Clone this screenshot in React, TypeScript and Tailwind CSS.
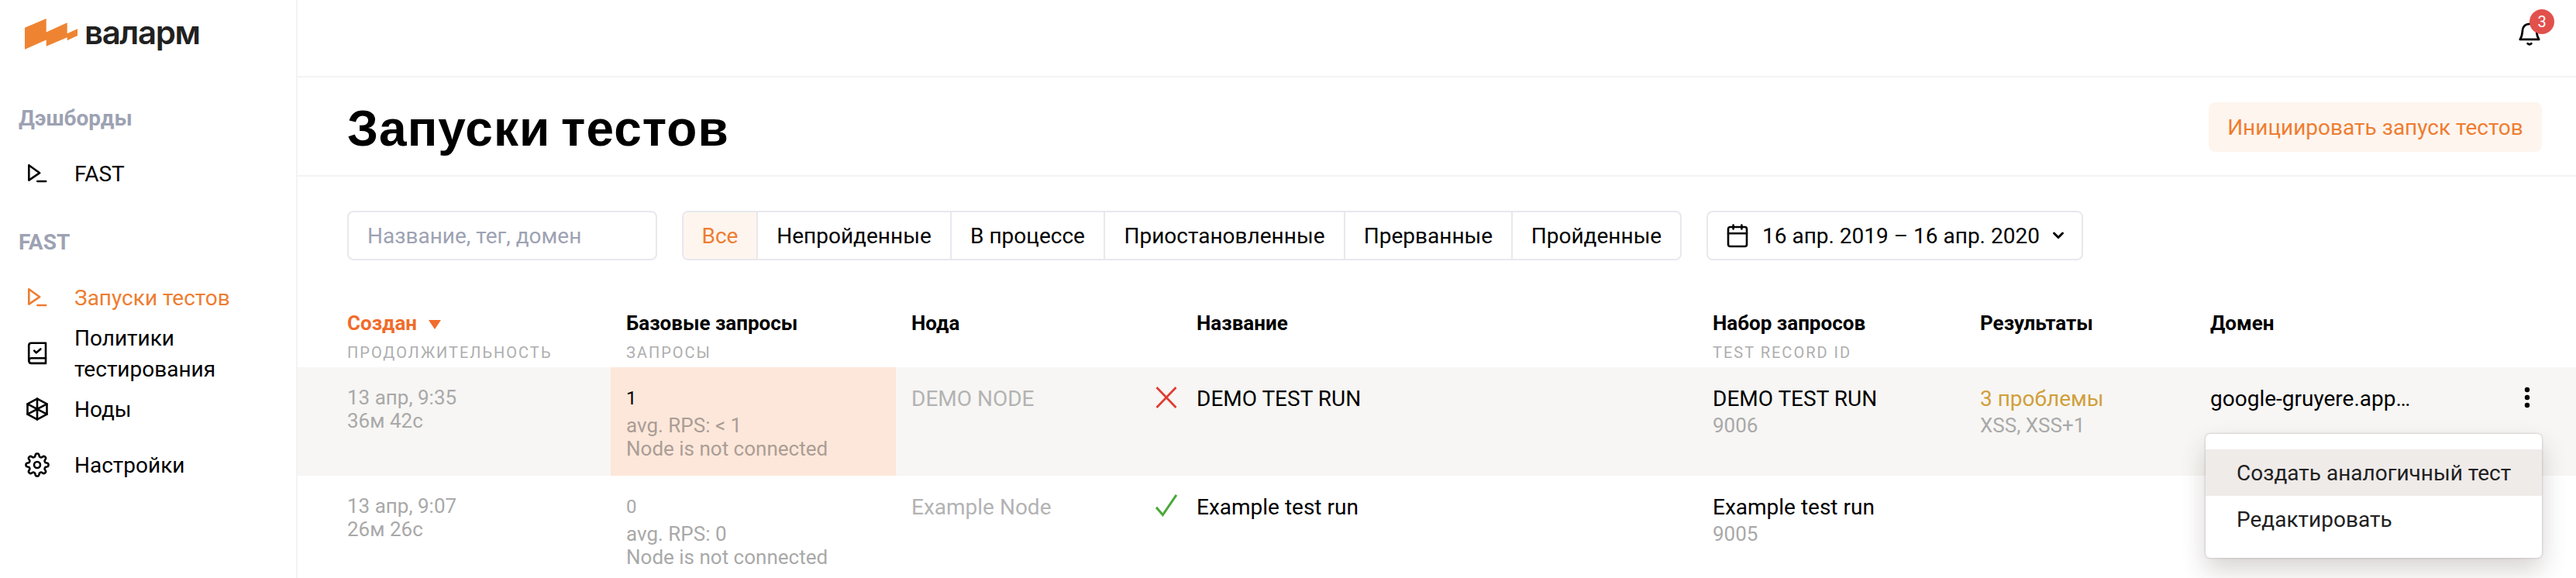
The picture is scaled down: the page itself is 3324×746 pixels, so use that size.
import React from "react";

type IconProps = { className?: string };

const PlayPrompt = ({ className = "" }: IconProps) => (
  <svg viewBox="0 0 32 32" className={`h-8 w-8 ${className}`} fill="none" stroke="currentColor" strokeWidth="2.6" strokeLinejoin="round" strokeLinecap="round">
    <path d="M5.3 5.2V24.6L19.2 15.2Z" />
    <path d="M16.3 26H27.2" />
  </svg>
);

const Book = () => (
  <svg viewBox="0 0 32 32" className="h-8 w-8" fill="none" stroke="currentColor" strokeWidth="2.6" strokeLinejoin="round" strokeLinecap="round">
    <path d="M27 2.7H8.5Q5.2 2.7 5.2 6V25.2Q5.2 28.9 8.5 28.9H27Z" />
    <path d="M5.5 24.7Q5.8 22.3 8.5 22.3H27" />
    <path d="M12.2 12.7L14.8 15.3L20.4 10.5" />
  </svg>
);

const Hexagon = () => (
  <svg viewBox="0 0 32 32" className="h-8 w-8" fill="none" stroke="currentColor" strokeWidth="2.6" strokeLinejoin="round" strokeLinecap="round">
    <path d="M16 2.6L28.5 9.3V22.7L16 29.4L3.5 22.7V9.3Z" />
    <path d="M16 2.6V29.4M3.5 9.3L28.5 22.7M28.5 9.3L3.5 22.7" />
  </svg>
);

const gearPath = (() => {
  const pts: string[] = [];
  const n = 160;
  for (let i = 0; i < n; i++) {
    const a = (i / n) * Math.PI * 2;
    const w = Math.tanh(1.8 * Math.cos(8 * a)) / Math.tanh(1.8);
    const r = 12.6 + 1.9 * w;
    pts.push(`${(16 + r * Math.sin(a)).toFixed(2)} ${(16 - r * Math.cos(a)).toFixed(2)}`);
  }
  return `M${pts.join("L")}Z`;
})();

const Gear = () => (
  <svg viewBox="0 0 32 32" className="h-8 w-8 overflow-visible" fill="none" stroke="currentColor" strokeWidth="2.6" strokeLinejoin="round">
    <path d={gearPath} />
    <circle cx="16" cy="16" r="4" />
  </svg>
);

const Logo = () => (
  <svg viewBox="0 0 68 40" className="h-10 w-[68px]" fill="#ee8432">
    <path d="M0 11.7L27.7 0V17.6L54.7 5.3V19.2L68 13.3V22L54.7 28.3V24.3L27.7 35.7V27.6L0 39.7Z" />
  </svg>
);

const Bell = () => (
  <svg viewBox="0 0 32 32" className="h-8 w-8" fill="none" stroke="black" strokeWidth="2.8" strokeLinejoin="round" strokeLinecap="round">
    <path d="M3.8 22.9C6.7 18.5 6.5 16.5 6.9 11.8C7.3 6 11 2.8 16 2.8S24.700 6 25.100 11.800C25.500 16.500 25.300 18.500 28.200 22.900Z" />
    <path d="M13.7 28.2Q16 30.3 18.3 28.2" />
  </svg>
);

const Calendar = () => (
  <svg viewBox="0 0 28 32" className="h-8 w-7" fill="none" stroke="black" strokeWidth="2.6" strokeLinejoin="round" strokeLinecap="round">
    <rect x="2" y="5" width="24" height="25" rx="2.5" />
    <path d="M2 13.3H26M8.6 2.6V7.5M19.4 2.6V7.5" />
  </svg>
);

const Cross = () => (
  <svg viewBox="0 0 28 30" className="-mt-px h-[30px] w-7" fill="none" stroke="#e03c31" strokeWidth="2.8">
    <path d="M1.5 2L26.5 28M26.5 2L1.5 28" />
  </svg>
);

const Check = () => (
  <svg viewBox="0 0 28 30" className="-mt-px h-[30px] w-7" fill="none" stroke="#4aa83a" strokeWidth="3">
    <path d="M1 16.8L9.4 26.6L27 0.8" />
  </svg>
);

const NavItem = ({ icon, label, active }: { icon: React.ReactNode; label: string; active?: boolean }) => (
  <a className={`flex h-[72px] items-center pl-8 text-[28px] leading-10 ${active ? "text-[#ee7d30]" : "text-black"}`}>
    <span className="w-16 shrink-0">{icon}</span>
    <span className="w-[230px] pt-0.5">{label}</span>
  </a>
);

const NavTitle = ({ children }: { children: React.ReactNode }) => (
  <h2 className="flex h-[72px] items-center pt-0.5 pl-6 text-[28px] leading-10 font-bold text-[#9da2b3]">{children}</h2>
);

const filters = [
  { label: "Все", w: "w-24" },
  { label: "Непройденные", w: "w-[250px]" },
  { label: "В процессе", w: "w-[198px]" },
  { label: "Приостановленные", w: "w-[310px]" },
  { label: "Прерванные", w: "w-[216px]" },
  { label: "Пройденные", w: "w-[216px]" },
];

const cols = "grid grid-cols-[340px_368px_368px_666px_345px_297px_1fr]";

const Head = ({ title, sub, className = "" }: { title: React.ReactNode; sub?: string; className?: string }) => (
  <div className={className}>
    <div className="flex h-8 items-center text-[26px] leading-8 font-bold">{title}</div>
    {sub && <div className="mt-2.5 text-xl leading-6 tracking-[2px] whitespace-nowrap text-[#aeaeae]">{sub}</div>}
  </div>
);

type Run = {
  date: string;
  dur: string;
  count: string;
  rps: string;
  node: string;
  ok: boolean;
  name: string;
  record: string;
  problems?: string;
  kinds?: string;
  domain?: string;
  hot?: boolean;
};

const runs: Run[] = [
  { date: "13 апр, 9:35", dur: "36м 42с", count: "1", rps: "avg. RPS: < 1", node: "DEMO NODE", ok: false, name: "DEMO TEST RUN", record: "9006", problems: "3 проблемы", kinds: "XSS, XSS+1", domain: "google-gruyere.app…", hot: true },
  { date: "13 апр, 9:07", dur: "26м 26с", count: "0", rps: "avg. RPS: 0", node: "Example Node", ok: true, name: "Example test run", record: "9005" },
];

const Row = ({ run }: { run: Run }) => (
  <div className={`${cols} h-[140px] shrink-0 pl-16 text-[28px] leading-8 text-black ${run.hot ? "bg-[#f7f6f4]" : ""}`}>
    <div className="pt-6 text-[26px] leading-[30px] text-[#a9a9a9]">
      <div>{run.date}</div>
      <div>{run.dur}</div>
    </div>
    <div className={`pt-6 pl-5 text-[26px] leading-[30px] ${run.hot ? "bg-[#fce7da] text-[#ab9d95]" : "text-[#a9a9a9]"}`}>
      <div className={`text-2xl leading-8 ${run.hot ? "text-black" : ""}`}>{run.count}</div>
      <div className="pt-1">{run.rps}</div>
      <div>Node is not connected</div>
    </div>
    <div className="flex items-start justify-between pt-[25px] pl-5 text-[#b3b3b3]">
      <span>{run.node}</span>
      <span className="mr-[5px]">{run.ok ? <Check /> : <Cross />}</span>
    </div>
    <div className="pt-[25px] pl-5">{run.name}</div>
    <div className="pt-[25px] pl-5">
      <div>{run.name}</div>
      <div className="pt-[3px] text-[26px] leading-[30px] text-[#a9a9a9]">{run.record}</div>
    </div>
    <div className="pt-[25px] pl-5">
      <div className="text-[#d19f3a]">{run.problems}</div>
      <div className="pt-[3px] text-[26px] leading-[30px] text-[#a9a9a9]">{run.kinds}</div>
    </div>
    <div className="flex items-start justify-between pt-[25px] pl-5">
      <span>{run.domain}</span>
      {run.hot && (
        <svg viewBox="0 0 8 28" className="mr-[59px] h-7 w-2">
          <circle cx="4" cy="4" r="3.2" />
          <circle cx="4" cy="14" r="3.2" />
          <circle cx="4" cy="24" r="3.2" />
        </svg>
      )}
    </div>
  </div>
);

export default function App() {
  return (
    <div className="relative flex h-[746px] w-[3324px] overflow-hidden bg-white font-['Roboto',sans-serif] text-black">
      <aside className="flex w-96 shrink-0 flex-col border-r-2 border-[#f3f3f5]">
        <div className="flex h-[116px] items-start pt-6 pl-8">
          <Logo />
          <span className="ml-[9px] font-['Inter',sans-serif] text-[42px] leading-9 font-semibold tracking-[-1.4px] text-[#212121]">валарм</span>
        </div>
        <NavTitle>Дэшборды</NavTitle>
        <NavItem icon={<PlayPrompt />} label="FAST" />
        <div className="mt-4" />
        <NavTitle>FAST</NavTitle>
        <NavItem icon={<PlayPrompt />} label="Запуски тестов" active />
        <NavItem icon={<Book />} label="Политики тестирования" />
        <NavItem icon={<Hexagon />} label="Ноды" />
        <NavItem icon={<Gear />} label="Настройки" />
      </aside>

      <main className="flex min-w-0 flex-1 flex-col">
        <header className="flex h-[100px] shrink-0 items-start justify-end border-b-2 border-[#f3f3f5] pt-7 pr-11">
          <div className="relative h-8 w-8">
            <Bell />
            <span className="absolute -top-4 left-4 flex h-8 w-8 items-center justify-center rounded-full bg-[#e2504c] text-xl leading-none text-white">3</span>
          </div>
        </header>

        <div className="flex h-32 shrink-0 items-center justify-between border-b-2 border-[#f3f3f5] pr-11 pl-16">
          <h1 className="pt-1.5 font-['Liberation_Sans',sans-serif] text-[64px] leading-none font-bold tracking-[1px] [word-spacing:-5px]">Запуски тестов</h1>
          <button className="mt-0.5 h-16 w-[430px] rounded-lg bg-[#fef5ef] pt-0.5 text-[28px] text-[#ee7d30]">Инициировать запуск тестов</button>
        </div>

        <div className="mt-11 flex h-16 shrink-0 pl-16 text-[28px] leading-8">
          <div className="flex w-[400px] items-center rounded-lg border-2 border-[#e8e8ee] pt-0.5 pl-6 text-[#9da2b3]">Название, тег, домен</div>
          <div className="ml-8 flex w-[1290px] overflow-hidden rounded-lg border-2 border-[#e8e8ee]">
            {filters.map((f, i) => (
              <div key={f.label} className={`flex items-center justify-center pt-0.5 whitespace-nowrap ${f.w} ${i === 0 ? "bg-[#fef5ef] text-[#ee7d30]" : ""} ${i < filters.length - 1 ? "border-r-2 border-[#e8e8ee]" : ""}`}>
                {f.label}
              </div>
            ))}
          </div>
          <div className="ml-8 flex w-[486px] items-center rounded-lg border-2 border-[#e8e8ee] pl-6">
            <Calendar />
            <span className="ml-[18px] w-[360px] pt-0.5 whitespace-nowrap">16 апр. 2019 – 16 апр. 2020</span>
            <svg viewBox="0 0 16 12" className="ml-3.5 h-3 w-4" fill="none" stroke="black" strokeWidth="3" strokeLinecap="round" strokeLinejoin="round">
              <path d="M2.5 3L8 8.5L13.5 3" />
            </svg>
          </div>
        </div>

        <div className={`${cols} mt-[65px] h-[73px] shrink-0 pl-16`}>
          <Head
            title={
              <span className="flex items-center text-[#f06c2b]">
                Создан
                <svg viewBox="0 0 16 12" className="mt-1 ml-[15px] h-3 w-4" fill="currentColor">
                  <path d="M0 0H16L8 12Z" />
                </svg>
              </span>
            }
            sub="ПРОДОЛЖИТЕЛЬНОСТЬ"
          />
          <Head title="Базовые запросы" sub="ЗАПРОСЫ" className="pl-5" />
          <Head title="Нода" className="pl-5" />
          <Head title="Название" className="pl-5" />
          <Head title="Набор запросов" sub="TEST RECORD ID" className="pl-5" />
          <Head title="Результаты" className="pl-5" />
          <Head title="Домен" className="pl-5" />
        </div>
        {runs.map((r) => (
          <Row key={r.record} run={r} />
        ))}
      </main>

      <div className="absolute top-[560px] left-[2846px] h-40 w-[434px] rounded-md bg-white py-5 text-[28px] leading-[60px] text-[#212121] shadow-[0_16px_32px_rgba(62,39,35,0.2),0_0_3px_rgba(0,0,0,0.25)]">
        <div className="h-[60px] bg-[#efebe9] pt-px pl-10 whitespace-nowrap">Создать аналогичный тест</div>
        <div className="h-[60px] pt-px pl-10 whitespace-nowrap">Редактировать</div>
      </div>
    </div>
  );
}
